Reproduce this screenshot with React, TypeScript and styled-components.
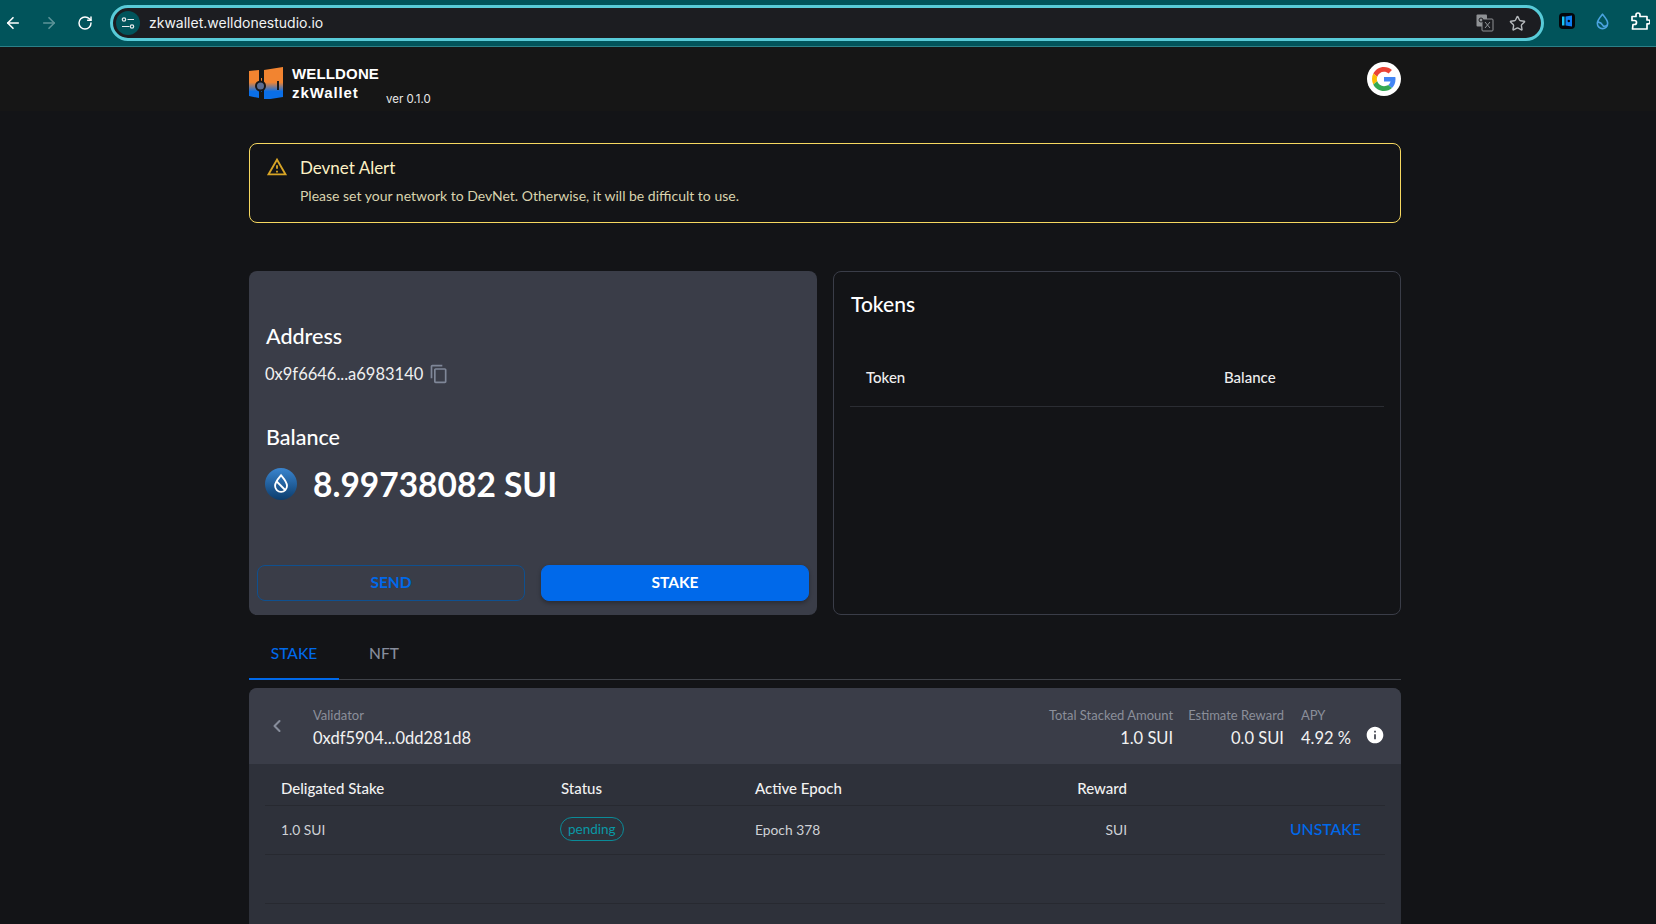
import React from "react";
import styled, { createGlobalStyle } from "styled-components";
import { ArrowLeft, ArrowRight, RotateCw, Star, ChevronLeft } from "lucide-react";
import { MdContentCopy, MdInfo, MdOutlineWarningAmber } from "react-icons/md";

const GlobalStyle = createGlobalStyle`
  html, body {
    margin: 0;
    height: 924px;
    overflow: hidden;
    background: #131417;
  }
  * {
    box-sizing: border-box;
  }
`;

const Page = styled.div`
  width: 1656px;
  height: 924px;
  overflow: hidden;
  font-family: "Lato", "Noto Sans", sans-serif;
  color: #fff;
`;

const Toolbar = styled.div`
  height: 47px;
  display: flex;
  align-items: flex-start;
  padding: 5px 0 0 2px;
  background: #01545b;
  border-bottom: 1px solid #2b8088;
`;

const NavButton = styled.div<{ $dim?: boolean }>`
  width: 36px;
  height: 36px;
  display: flex;
  align-items: center;
  justify-content: center;
  margin-left: -7px;
  margin-right: 7px;
  color: ${(p) => (p.$dim ? "#5d9499" : "#fff")};
`;

const AddressBar = styled.div`
  flex: none;
  width: 1434px;
  height: 36px;
  display: flex;
  align-items: center;
  padding: 0 15px 0 3px;
  background: #1c1d21;
  border: 3px solid #58cbd8;
  border-radius: 18px;
`;

const SiteBadge = styled.div`
  width: 24px;
  height: 24px;
  border-radius: 50%;
  background: #01545b;
  display: flex;
  align-items: center;
  justify-content: center;
`;

const Url = styled.span`
  flex: 1;
  margin: -1px 0 0 9px;
  font-family: "Inter", sans-serif;
  font-size: 14px;
  color: #f1f3f4;
`;

const BarIcons = styled.div`
  display: flex;
  align-items: center;
  gap: 15px;
  color: #b5b8bb;
`;

const Extensions = styled.div`
  display: flex;
  align-items: center;
  gap: 18px;
  margin: 6px 0 0 15px;
`;

const Header = styled.header`
  height: 64px;
  background: #161616;
  padding: 0 255px 0 249px;
  display: flex;
  align-items: center;
  justify-content: space-between;
`;

const Brand = styled.div`
  display: flex;
  align-items: flex-start;
  height: 40px;
  margin-top: 9px;
`;

const LogoSlot = styled.div`
  display: flex;
  margin-top: 3px;
`;

const BrandName = styled.div`
  margin-left: 9px;
  font-family: "Liberation Sans", sans-serif;
  font-weight: 700;
  font-size: 15px;
  line-height: 19px;
  letter-spacing: 0.15px;
`;

const BrandProduct = styled.span`
  letter-spacing: 0.9px;
`;

const Version = styled.span`
  margin: 28px 0 0 7px;
  font-family: "Inter", sans-serif;
  font-size: 11.5px;
  line-height: 15px;
  color: #e8e8e8;
`;

const GoogleBadge = styled.div`
  width: 34px;
  height: 34px;
  margin-top: -1px;
  border-radius: 50%;
  background: #fff;
  display: flex;
  align-items: center;
  justify-content: center;
`;

const Main = styled.main`
  padding: 32px 255px 0 249px;
`;

const Alert = styled.section`
  height: 80px;
  padding: 12px 16px;
  display: flex;
  gap: 12px;
  border: 1px solid #f6d860;
  border-radius: 8px;
  color: #d8a526;
`;

const AlertBody = styled.div`
  display: flex;
  flex-direction: column;
`;

const AlertTitle = styled.div`
  font-size: 17px;
  line-height: 24px;
  color: #fdf1c4;
`;

const AlertText = styled.div`
  margin-top: 6px;
  font-size: 14px;
  line-height: 20px;
  color: #d9d3ae;
`;

const Cards = styled.div`
  margin-top: 48px;
  display: grid;
  grid-template-columns: 1fr 1fr;
  gap: 16px;
  height: 344px;
`;

const WalletCard = styled.section`
  display: flex;
  flex-direction: column;
  padding: 51px 8px 14px;
  background: #3a3d48;
  border-radius: 8px;
`;

const SectionTitle = styled.h2`
  margin: 0;
  padding-left: 9px;
  font-size: 21.5px;
  line-height: 28px;
  font-weight: 500;
`;

const AddressRow = styled.div`
  margin: 12px 0 37px;
  padding-left: 8px;
  display: flex;
  align-items: center;
  gap: 6px;
  height: 24px;
  font-size: 16.5px;
  color: #f0f0f0;
  svg {
    color: #7f8798;
  }
`;

const BalanceRow = styled.div`
  margin-top: 16px;
  padding-left: 8px;
  display: flex;
  align-items: center;
  gap: 16px;
  height: 34px;
  font-size: 33.5px;
  font-weight: 700;
`;

const Actions = styled.div`
  margin-top: auto;
  display: grid;
  grid-template-columns: 1fr 1fr;
  gap: 16px;
`;

const ActionButton = styled.button<{ $primary?: boolean }>`
  height: 36px;
  padding-bottom: 3px;
  border-radius: 8px;
  border: 1px solid ${(p) => (p.$primary ? "#0069ea" : "#0f508f")};
  background: ${(p) => (p.$primary ? "#0069ea" : "transparent")};
  color: ${(p) => (p.$primary ? "#fff" : "#0069ea")};
  font-family: inherit;
  font-size: 15.5px;
  font-weight: 700;
  box-shadow: ${(p) => (p.$primary ? "0 2px 4px rgba(0, 0, 0, 0.3)" : "none")};
`;

const TokensCard = styled.section`
  padding: 18px 16px 0;
  border: 1px solid #3a3d48;
  border-radius: 8px;
`;

const TokensTitle = styled.h2`
  margin: 0 0 0 1px;
  font-size: 21px;
  line-height: 28px;
  font-weight: 500;
`;

const TokensHead = styled.div`
  margin-top: 30px;
  height: 59px;
  display: grid;
  grid-template-columns: 358px 1fr;
  align-items: center;
  padding-left: 16px;
  border-bottom: 1px solid #2b2d33;
  font-size: 15px;
  font-weight: 500;
  color: #eee;
`;

const Tabs = styled.nav`
  height: 65px;
  display: flex;
  border-bottom: 1px solid #3f4249;
`;

const Tab = styled.div<{ $active?: boolean }>`
  width: 90px;
  height: 65px;
  padding-top: 27px;
  text-align: center;
  font-size: 15.5px;
  line-height: 22px;
  font-weight: 500;
  color: ${(p) => (p.$active ? "#0069ea" : "#868c9b")};
  border-bottom: 2px solid ${(p) => (p.$active ? "#0069ea" : "transparent")};
`;

const Panel = styled.section`
  margin-top: 8px;
  height: 300px;
  border-radius: 8px 8px 0 0;
  overflow: hidden;
  background: #2e313a;
`;

const PanelHead = styled.div`
  height: 76px;
  background: #3a3d48;
  padding: 0 16px 0 18px;
  display: flex;
  align-items: center;
`;

const BackIcon = styled.div`
  display: flex;
  margin-right: 26px;
  color: #878d9b;
`;

const Validator = styled.div`
  flex: 1;
`;

const Stat = styled.div<{ $left?: boolean }>`
  margin-left: ${(p) => (p.$left ? "17px" : "15px")};
  text-align: ${(p) => (p.$left ? "left" : "right")};
`;

const StatLabel = styled.div`
  padding-top: 2px;
  font-size: 13px;
  line-height: 18px;
  color: #8b8f9a;
`;

const StatValue = styled.div`
  margin-top: 3px;
  font-size: 16.5px;
  line-height: 22px;
  color: #f2f2f2;
`;

const InfoIcon = styled.div`
  display: flex;
  margin: 18px 0 0 14px;
  color: #fff;
`;

const TableRow = styled.div<{ $head?: boolean }>`
  margin: 0 16px;
  height: ${(p) => (p.$head ? "42px" : "49px")};
  padding-top: ${(p) => (p.$head ? "6px" : "0")};
  padding-bottom: ${(p) => (p.$head ? "0" : "2px")};
  display: grid;
  grid-template-columns: 280px 194px 200px 188px 1fr;
  align-items: center;
  border-bottom: 1px solid #272930;
  font-size: ${(p) => (p.$head ? "15px" : "13.8px")};
  font-weight: ${(p) => (p.$head ? 500 : 400)};
  color: ${(p) => (p.$head ? "#f2f2f2" : "#cfd1d6")};
`;

const Cell = styled.div<{ $end?: boolean }>`
  padding-left: ${(p) => (p.$end ? 0 : "16px")};
  text-align: ${(p) => (p.$end ? "right" : "left")};
`;

const StatusPill = styled.span`
  display: inline-block;
  margin-left: -1px;
  height: 24px;
  padding: 0 7px;
  line-height: 22px;
  border: 1px solid #0a8b98;
  border-radius: 12px;
  font-size: 13.5px;
  color: #0a98a5;
`;

const Unstake = styled.span`
  display: inline-block;
  padding: 0 24px 2px 0;
  font-size: 15.8px;
  font-weight: 500;
  color: #0069ea;
`;

const SuiDrop = ({ size, color }: { size: number; color: string }) => (
  <svg width={size} height={size} viewBox="0 0 24 24" fill="none" stroke={color} strokeWidth="2">
    <path d="M12 3c3 3.600 6.500 7.400 6.500 11.400A6.500 6.500 0 0 1 12 21a6.500 6.500 0 0 1-6.500-6.600C5.500 10.400 9 6.600 12 3Z" />
    <path d="M6 12.500c3 .6 5 2 6.500 4.500 1 1.500 3 1.500 5.500-.5" />
  </svg>
);

const SuiBadge = () => (
  <svg width="32" height="32" viewBox="0 0 32 32">
    <defs>
      <linearGradient id="sui" x1="0" y1="0" x2="0" y2="1">
        <stop offset="0" stopColor="#3a85cf" />
        <stop offset="1" stopColor="#0c3d6d" />
      </linearGradient>
    </defs>
    <circle cx="16" cy="16" r="16" fill="url(#sui)" />
    <g transform="translate(5 4.500) scale(.92)" fill="none" stroke="#fff" strokeWidth="2">
      <path d="M12 3c3 3.600 6.500 7.400 6.500 11.400A6.500 6.500 0 0 1 12 21a6.500 6.500 0 0 1-6.500-6.600C5.500 10.400 9 6.600 12 3Z" />
      <path d="M7 9.500 16.500 19" />
    </g>
  </svg>
);

const Logo = () => (
  <svg width="34" height="32" viewBox="0 0 34 32">
    <defs>
      <linearGradient id="logo" x1="0" y1="0" x2="0" y2="1">
        <stop offset="0.45" stopColor="#f28430" />
        <stop offset="0.72" stopColor="#0a6fe8" />
      </linearGradient>
    </defs>
    <path d="M0 4 10 3V31L0 29Z M12 3h1l0 31h-1Z M15 3 34 0V30L15 33Z" fill="url(#logo)" />
    <circle cx="11.500" cy="19" r="4.500" fill="#5a6d93" stroke="#161616" strokeWidth="2" />
    <rect x="10" y="2" width="3" height="9" fill="#161616" />
    <rect x="10" y="25" width="3" height="8" fill="#161616" />
    <rect x="28" y="14" width="2" height="9" fill="#161616" />
  </svg>
);

const GoogleMark = () => (
  <svg width="24" height="24" viewBox="0 0 48 48">
    <path fill="#EA4335" d="M24 9.500c3.500 0 6.700 1.300 9.100 3.500l6.800-6.800C35.800 2.400 30.300 0 24 0 14.600 0 6.500 5.400 2.600 13.200l7.900 6.100C12.400 13.700 17.700 9.500 24 9.500z" />
    <path fill="#4285F4" d="M47 24.500c0-1.600-.1-3.100-.4-4.500H24v9h13c-.6 3-2.300 5.500-4.800 7.200l7.700 6c4.500-4.200 7.100-10.300 7.100-17.700z" />
    <path fill="#FBBC05" d="M10.500 28.700c-.5-1.400-.8-3-.8-4.700s.3-3.300.8-4.700l-7.900-6.100C.9 16.500 0 20.100 0 24s.9 7.500 2.600 10.800l7.900-6.100z" />
    <path fill="#34A853" d="M24 48c6.500 0 11.900-2.100 15.900-5.800l-7.700-6c-2.200 1.400-4.900 2.300-8.200 2.300-6.300 0-11.600-4.200-13.500-9.800l-7.900 6.100C6.500 42.600 14.600 48 24 48z" />
  </svg>
);

const TuneIcon = () => (
  <svg width="14" height="14" viewBox="0 0 14 14" fill="none" stroke="#e8eaed" strokeWidth="1.200">
    <circle cx="3" cy="3.500" r="1.700" />
    <path d="M6.500 3.500H13M1 10.500h7.500" />
    <circle cx="11" cy="10.500" r="1.700" />
  </svg>
);

const TranslateIcon = () => (
  <svg width="18" height="18" viewBox="0 0 18 18">
    <rect x="0.500" y="0.500" width="10.500" height="12" rx="1" fill="#8f9295" />
    <rect x="6" y="5" width="11" height="12" rx="1" fill="#1c1d21" stroke="#8f9295" />
    <path d="M9 8l5 6M14 8l-5 6" stroke="#8f9295" fill="none" />
    <circle cx="5" cy="6" r="2" fill="none" stroke="#1c1d21" />
  </svg>
);

const ExtensionTile = () => (
  <svg width="16" height="16" viewBox="0 0 16 16">
    <rect width="16" height="16" rx="4" fill="#04060a" />
    <path d="M3 3.500h2.500v9H3Z" fill="#19c3f2" />
    <path d="M6.500 3.500 13 2.500v11l-6.500-1Z" fill="#0e7ff0" />
    <circle cx="9.800" cy="8" r="1.200" fill="#04060a" />
  </svg>
);

const PuzzleIcon = () => (
  <svg width="20" height="20" viewBox="0 0 20 20" fill="none" stroke="#fff" strokeWidth="1.700" strokeLinejoin="round">
    <path d="M2 5.500h4V4a2 2 0 0 1 4 0v1.500h7V9h1.200a1.900 1.900 0 0 1 0 3.800H17V18H2.500l.5-4.500H4.500a2 2 0 0 0 0-4H2Z" />
  </svg>
);

const App: React.FC = () => {
  return (
    <Page>
      <GlobalStyle />
      <Toolbar>
        <NavButton>
          <ArrowLeft size={18} strokeWidth={2.2} />
        </NavButton>
        <NavButton $dim>
          <ArrowRight size={18} strokeWidth={2.2} />
        </NavButton>
        <NavButton>
          <RotateCw size={16} strokeWidth={2.2} />
        </NavButton>
        <AddressBar>
          <SiteBadge>
            <TuneIcon />
          </SiteBadge>
          <Url>zkwallet.welldonestudio.io</Url>
          <BarIcons>
            <TranslateIcon />
            <Star size={17} strokeWidth={2} />
          </BarIcons>
        </AddressBar>
        <Extensions>
          <ExtensionTile />
          <SuiDrop size={19} color="#4aa3df" />
          <PuzzleIcon />
        </Extensions>
      </Toolbar>

      <Header>
        <Brand>
          <LogoSlot>
            <Logo />
          </LogoSlot>
          <BrandName>
            WELLDONE
            <br />
            <BrandProduct>zkWallet</BrandProduct>
          </BrandName>
          <Version>ver 0.1.0</Version>
        </Brand>
        <GoogleBadge>
          <GoogleMark />
        </GoogleBadge>
      </Header>

      <Main>
        <Alert>
          <MdOutlineWarningAmber size={22} />
          <AlertBody>
            <AlertTitle>Devnet Alert</AlertTitle>
            <AlertText>Please set your network to DevNet. Otherwise, it will be difficult to use.</AlertText>
          </AlertBody>
        </Alert>

        <Cards>
          <WalletCard>
            <SectionTitle>Address</SectionTitle>
            <AddressRow>
              0x9f6646...a6983140
              <MdContentCopy size={20} />
            </AddressRow>
            <SectionTitle>Balance</SectionTitle>
            <BalanceRow>
              <SuiBadge />
              8.99738082 SUI
            </BalanceRow>
            <Actions>
              <ActionButton>SEND</ActionButton>
              <ActionButton $primary>STAKE</ActionButton>
            </Actions>
          </WalletCard>
          <TokensCard>
            <TokensTitle>Tokens</TokensTitle>
            <TokensHead>
              <span>Token</span>
              <span>Balance</span>
            </TokensHead>
          </TokensCard>
        </Cards>

        <Tabs>
          <Tab $active>STAKE</Tab>
          <Tab>NFT</Tab>
        </Tabs>

        <Panel>
          <PanelHead>
            <BackIcon>
              <ChevronLeft size={20} strokeWidth={2.5} />
            </BackIcon>
            <Validator>
              <StatLabel>Validator</StatLabel>
              <StatValue>0xdf5904...0dd281d8</StatValue>
            </Validator>
            <Stat>
              <StatLabel>Total Stacked Amount</StatLabel>
              <StatValue>1.0 SUI</StatValue>
            </Stat>
            <Stat>
              <StatLabel>Estimate Reward</StatLabel>
              <StatValue>0.0 SUI</StatValue>
            </Stat>
            <Stat $left>
              <StatLabel>APY</StatLabel>
              <StatValue>4.92 %</StatValue>
            </Stat>
            <InfoIcon>
              <MdInfo size={20} />
            </InfoIcon>
          </PanelHead>
          <TableRow $head>
            <Cell>Deligated Stake</Cell>
            <Cell>Status</Cell>
            <Cell>Active Epoch</Cell>
            <Cell $end>Reward</Cell>
            <Cell />
          </TableRow>
          <TableRow>
            <Cell>1.0 SUI</Cell>
            <Cell>
              <StatusPill>pending</StatusPill>
            </Cell>
            <Cell>Epoch 378</Cell>
            <Cell $end>SUI</Cell>
            <Cell $end>
              <Unstake>UNSTAKE</Unstake>
            </Cell>
          </TableRow>
          <TableRow />
        </Panel>
      </Main>
    </Page>
  );
};

export default App;
